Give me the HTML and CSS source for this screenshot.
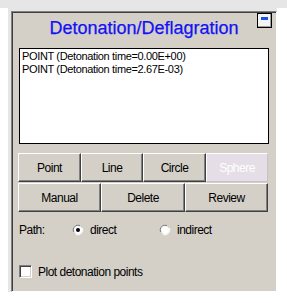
FILE: index.html
```html
<!DOCTYPE html>
<html>
<head>
<meta charset="utf-8">
<link rel="stylesheet" href="styles.css">
</head>
<body>
<div class="strip"></div>
<div class="frame">
  <div class="panel">
    <div class="title">Detonation/Deflagration</div>
    <div class="minbtn"><span class="minbar"></span></div>
    <div class="listbox">
      <div class="item">POINT (Detonation time=0.00E+00)</div>
      <div class="item">POINT (Detonation time=2.67E-03)</div>
    </div>
    <div class="buttons">
      <div class="row four">
        <button class="btn">Point</button>
        <button class="btn">Line</button>
        <button class="btn">Circle</button>
        <button class="btn disabled">Sphere</button>
      </div>
      <div class="row three">
        <button class="btn">Manual</button>
        <button class="btn">Delete</button>
        <button class="btn">Review</button>
      </div>
    </div>
    <div class="pathrow">
      <span class="pathlabel">Path:</span>
      <label class="radio first">
        <svg class="rdot" width="12" height="12" viewBox="0 0 12 12">
          <path d="M8 1.5 A5 5 0 0 0 1.5 8" fill="none" stroke="#808080" stroke-width="1"/>
          <path d="M7.5 2.7 A4 4 0 0 0 2.7 7.5" fill="none" stroke="#404040" stroke-width="1"/>
          <circle cx="6" cy="6" r="4" fill="#fff"/>
          <path d="M4 10.5 A5 5 0 0 0 10.5 4" fill="none" stroke="#ffffff" stroke-width="1"/>
          <circle cx="6" cy="6" r="2" fill="#000"/>
        </svg>
        <span>direct</span>
      </label>
      <label class="radio">
        <svg class="rdot" width="12" height="12" viewBox="0 0 12 12">
          <path d="M8 1.5 A5 5 0 0 0 1.5 8" fill="none" stroke="#808080" stroke-width="1"/>
          <path d="M7.5 2.7 A4 4 0 0 0 2.7 7.5" fill="none" stroke="#404040" stroke-width="1"/>
          <circle cx="6" cy="6" r="4" fill="#fff"/>
          <path d="M4 10.5 A5 5 0 0 0 10.5 4" fill="none" stroke="#ffffff" stroke-width="1"/>
        </svg>
        <span>indirect</span>
      </label>
    </div>
    <div class="checkrow">
      <span class="checkbox"></span>
      <span>Plot detonation points</span>
    </div>
  </div>
</div>
</body>
</html>
```
FILE: styles.css
```css
html, body {
  margin: 0;
  padding: 0;
  background: #ffffff;
}
body {
  width: 287px;
  height: 303px;
  overflow: hidden;
  font-family: "Liberation Sans", Arial, sans-serif;
}
.strip {
  height: 8px;
  background: #e6e6e6;
}
.frame {
  margin-left: 8px;
  width: 269px;
  padding: 3px 0 0 3px;
  background: linear-gradient(#e6e6e6, #e6e6e6) top left / 100% 3px no-repeat,
              linear-gradient(#e6e6e6, #e6e6e6) top left / 3px 100% no-repeat;
  box-sizing: border-box;
}
.panel {
  position: relative;
  width: 266px;
  height: 281px;
  box-sizing: border-box;
  background: #d4d0c8;
  border: 1px solid;
  border-color: #808080 #ffffff #ffffff #808080;
  box-shadow: inset 1px 1px #404040, inset -1px -1px #d4d0c8;
  padding: 5px 7px 0 7px;
}
.title {
  font-size: 18px;
  line-height: 22px;
  height: 22px;
  color: #1212f5;
  text-align: center;
  -webkit-text-stroke: 0.25px #1212f5;
}
.minbtn {
  position: absolute;
  left: 245px;
  top: 1px;
  width: 15px;
  height: 15px;
  box-sizing: border-box;
  border: 1px solid #000;
  background: #f4f4f4;
  box-shadow: inset -1px -1px #a0a0a0;
}
.minbar {
  position: absolute;
  left: 3px;
  top: 3px;
  width: 7px;
  height: 3px;
  background: #1a4fe8;
}
.listbox {
  margin-top: 9px;
  height: 96px;
  box-sizing: border-box;
  border: 1px solid #000;
  background: #ffffff;
  padding: 1px 2px;
  font-size: 11px;
  line-height: 13px;
  letter-spacing: -0.35px;
  color: #000;
}
.buttons {
  margin: 9px -1px 0 -1px;
  display: flex;
  flex-direction: column;
  gap: 1px;
}
.row {
  display: grid;
  height: 29px;
}
.row.four { grid-template-columns: 63px 62px 63px 62px; }
.row.three { grid-template-columns: 83px 84px 83px; }
.btn {
  margin: 0;
  padding: 0;
  background: #d4d0c8;
  border: 1px solid;
  border-color: #ffffff #404040 #404040 #ffffff;
  box-shadow: inset -1px -1px #808080;
  font-family: "Liberation Sans", Arial, sans-serif;
  font-size: 12px;
  letter-spacing: -0.5px;
  color: #000;
  height: 29px;
}
.btn.disabled {
  background: #e6dee6;
  color: #ffffff;
  border-color: #ffffff #c8c0c8 #c8c0c8 #ffffff;
  box-shadow: none;
}
.pathrow {
  margin-top: 11px;
  display: flex;
  align-items: center;
  height: 14px;
  font-size: 12px;
  letter-spacing: -0.5px;
  color: #000;
}
.pathlabel {
  width: 53px;
}
.radio {
  display: flex;
  align-items: center;
  gap: 6px;
}
.radio.first {
  width: 87px;
}
.rdot {
  display: block;
}
.checkrow {
  margin-top: 28px;
  display: flex;
  align-items: center;
  gap: 6px;
  height: 13px;
  font-size: 12px;
  letter-spacing: -0.5px;
  color: #000;
}
.checkbox {
  width: 13px;
  height: 13px;
  box-sizing: border-box;
  background: #fff;
  border: 1px solid;
  border-color: #808080 #ffffff #ffffff #808080;
  box-shadow: inset 1px 1px #404040, inset -1px -1px #d4d0c8;
}
```
